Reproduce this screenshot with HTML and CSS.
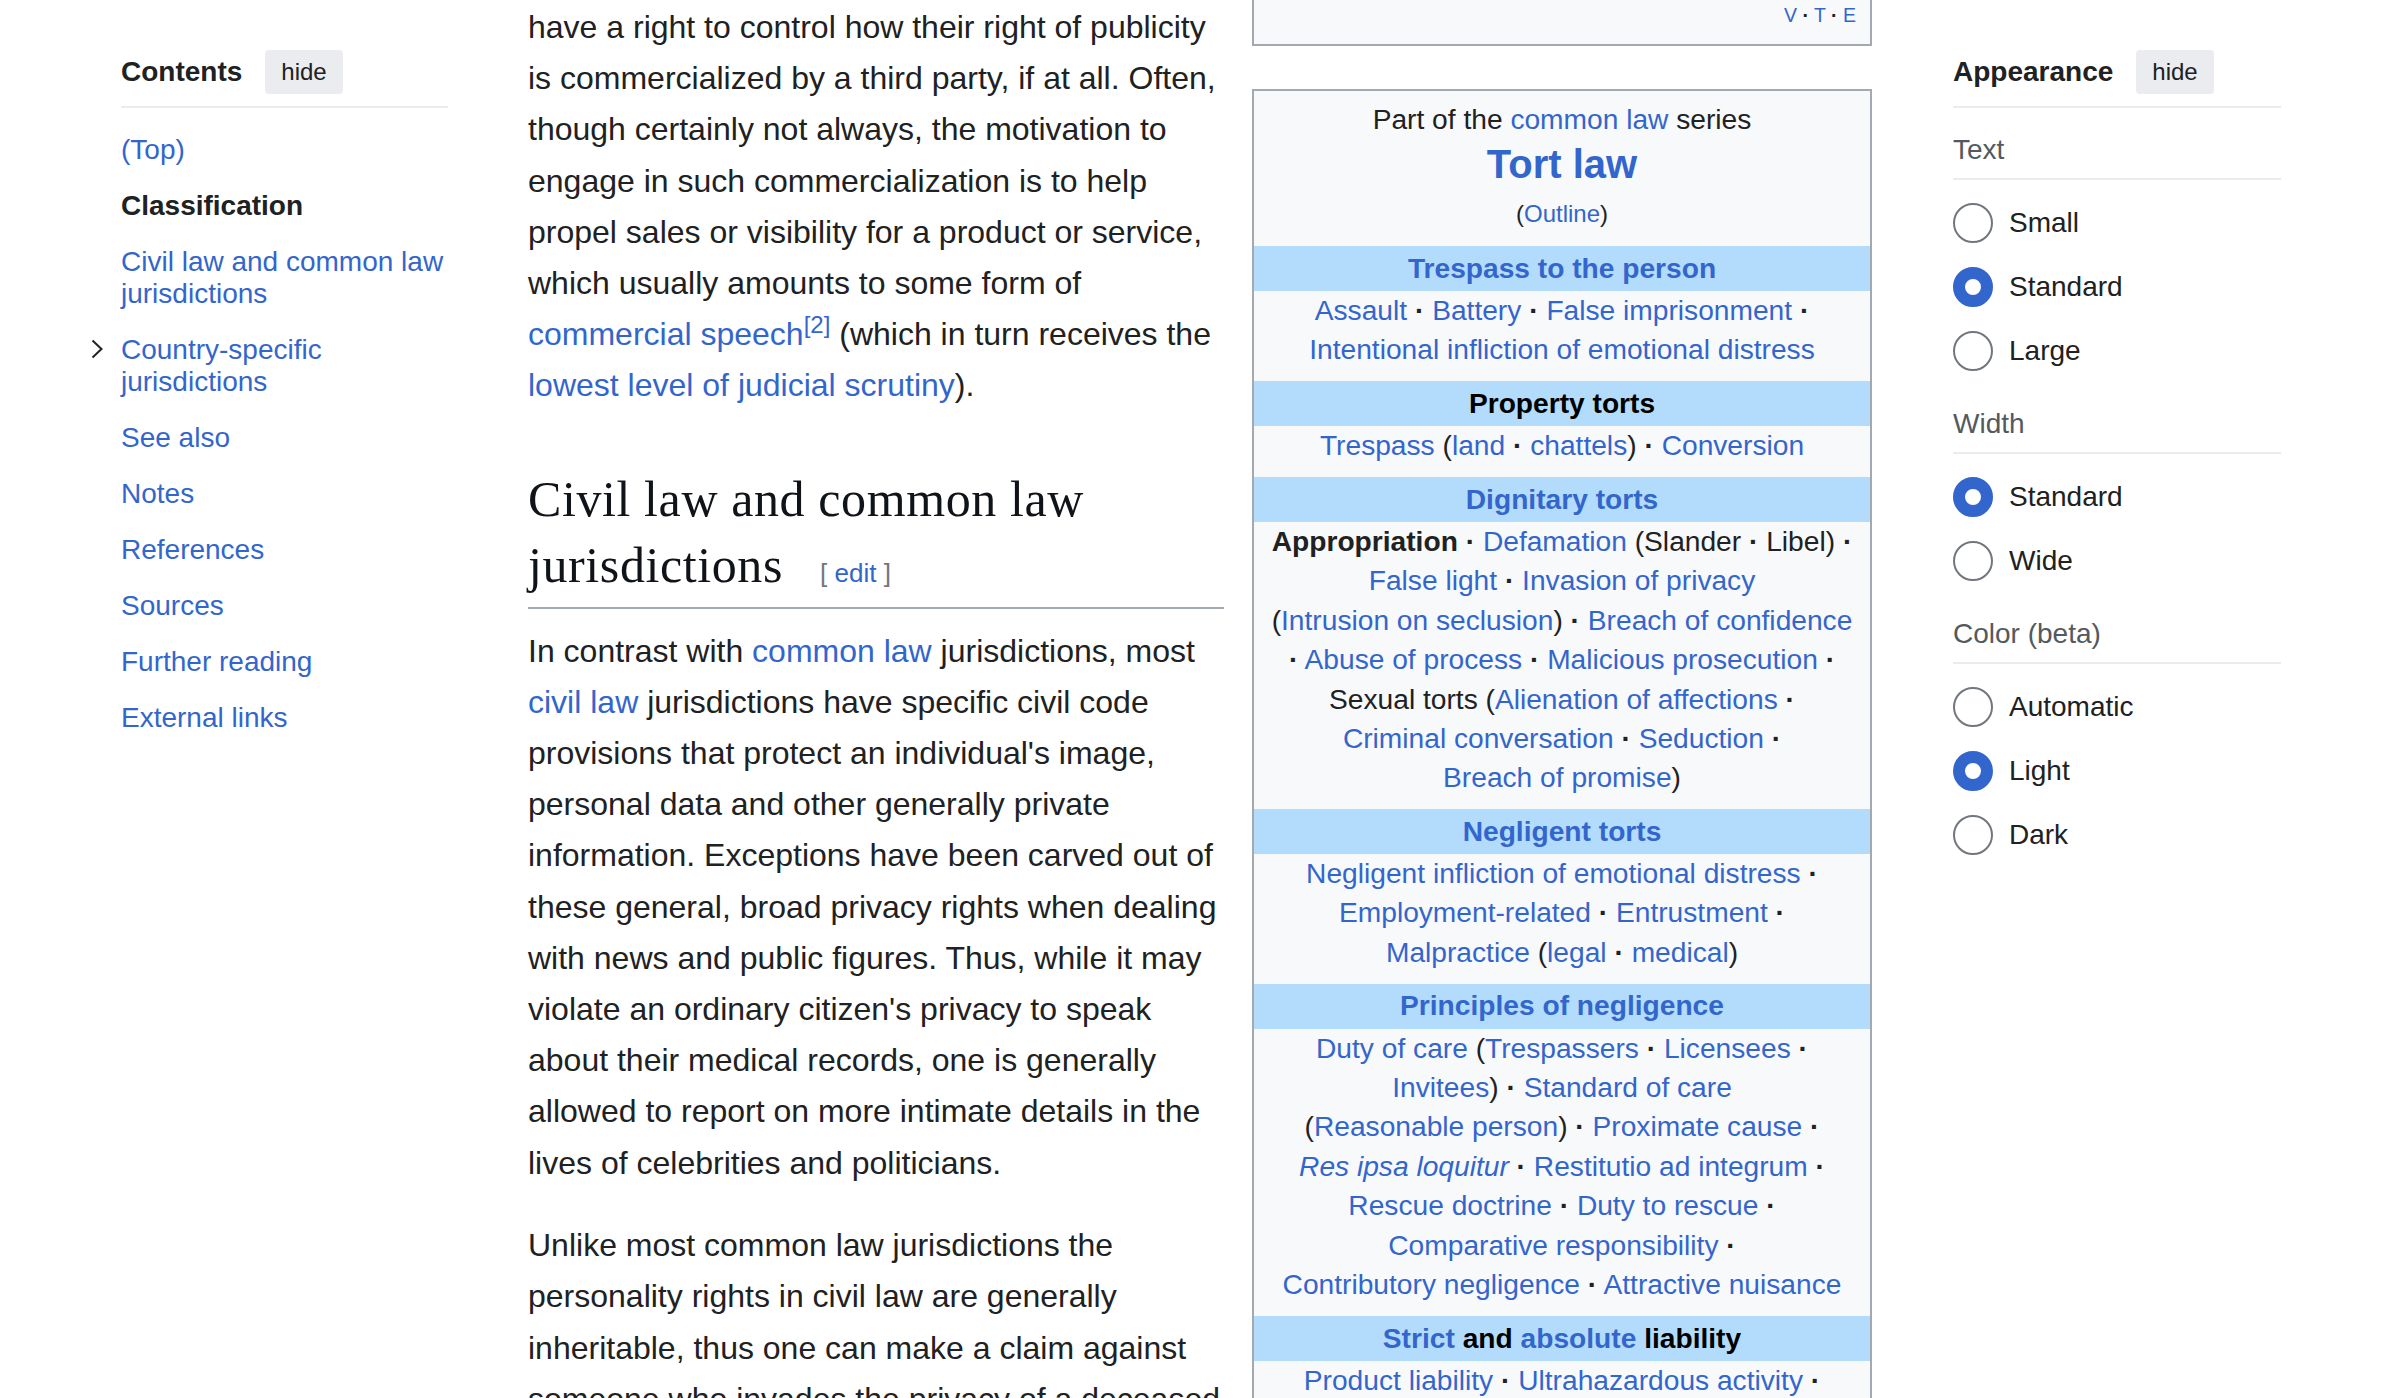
FILE: index.html
```html
<!DOCTYPE html>
<html lang="en">
<head>
<meta charset="utf-8">
<title>Personality rights</title>
<link rel="stylesheet" href="styles.css">
</head>
<body>
<div class="page">
  <nav class="toc">
    <div class="pin-head">
      <span class="pin-title">Contents</span>
      <button class="hide-btn">hide</button>
    </div>
    <ul class="toc-list">
      <li><a href="#">(Top)</a></li>
      <li class="active">Classification</li>
      <li><a href="#">Civil law and common law jurisdictions</a></li>
      <li>
        <span class="toggle"><svg width="12" height="20" viewBox="0 0 12 20"><path d="M1.5 1.5 L10.5 10 L1.5 18.5" fill="none" stroke="#202122" stroke-width="2"/></svg></span>
        <a href="#">Country-specific jurisdictions</a>
      </li>
      <li><a href="#">See also</a></li>
      <li><a href="#">Notes</a></li>
      <li><a href="#">References</a></li>
      <li><a href="#">Sources</a></li>
      <li><a href="#">Further reading</a></li>
      <li><a href="#">External links</a></li>
    </ul>
  </nav>

  <main class="main">
    <div class="text">
      <p>have a right to control how their right of publicity is commercialized by a third party, if at all. Often, though certainly not always, the motivation to engage in such commercialization is to help propel sales or visibility for a product or service, which usually amounts to some form of <a href="#">commercial speech</a><sup class="ref"><a href="#">[2]</a></sup> (which in turn receives the <a href="#">lowest level of judicial scrutiny</a>).</p>
      <h2>Civil law and common law jurisdictions<span class="editsection">[ <a href="#">edit</a> ]</span></h2>
      <p>In contrast with <a href="#">common law</a> jurisdictions, most <a href="#">civil law</a> jurisdictions have specific civil code provisions that protect an individual's image, personal data and other generally private information. Exceptions have been carved out of these general, broad privacy rights when dealing with news and public figures. Thus, while it may violate an ordinary citizen's privacy to speak about their medical records, one is generally allowed to report on more intimate details in the lives of celebrities and politicians.</p>
      <p>Unlike most common law jurisdictions the personality rights in civil law are generally inheritable, thus one can make a claim against someone who invades the privacy of a deceased person.</p>
    </div>

    <aside class="sidebar">
      <div class="navtail"><a href="#">V</a> <b>·</b> <a href="#">T</a> <b>·</b> <a href="#">E</a></div>
      <div class="infobox">
        <div class="pretitle">Part of the <a href="#">common law</a> series</div>
        <div class="ititle"><a href="#">Tort law</a></div>
        <div class="outline">(<a href="#">Outline</a>)</div>

        <div class="band"><a href="#">Trespass to the person</a></div>
        <div class="ibody">
          <div class="ln"><a href="#">Assault</a>&nbsp;<b>·</b> <a href="#">Battery</a>&nbsp;<b>·</b> <a href="#">False imprisonment</a>&nbsp;<b>·</b></div>
          <div class="ln"><a href="#">Intentional infliction of emotional distress</a></div>
        </div>

        <div class="band">Property torts</div>
        <div class="ibody">
          <div class="ln"><a href="#">Trespass</a> (<a href="#">land</a>&nbsp;<b>·</b> <a href="#">chattels</a>)&nbsp;<b>·</b> <a href="#">Conversion</a></div>
        </div>

        <div class="band"><a href="#">Dignitary torts</a></div>
        <div class="ibody">
          <div class="ln"><b>Appropriation</b>&nbsp;<b>·</b> <a href="#">Defamation</a> (Slander&nbsp;<b>·</b> Libel)&nbsp;<b>·</b></div>
          <div class="ln"><a href="#">False light</a>&nbsp;<b>·</b> <a href="#">Invasion of privacy</a></div>
          <div class="ln">(<a href="#">Intrusion on seclusion</a>)&nbsp;<b>·</b> <a href="#">Breach of confidence</a></div>
          <div class="ln"><b>·</b> <a href="#">Abuse of process</a>&nbsp;<b>·</b> <a href="#">Malicious prosecution</a>&nbsp;<b>·</b></div>
          <div class="ln">Sexual torts (<a href="#">Alienation of affections</a>&nbsp;<b>·</b></div>
          <div class="ln"><a href="#">Criminal conversation</a>&nbsp;<b>·</b> <a href="#">Seduction</a>&nbsp;<b>·</b></div>
          <div class="ln"><a href="#">Breach of promise</a>)</div>
        </div>

        <div class="band"><a href="#">Negligent torts</a></div>
        <div class="ibody">
          <div class="ln"><a href="#">Negligent infliction of emotional distress</a>&nbsp;<b>·</b></div>
          <div class="ln"><a href="#">Employment-related</a>&nbsp;<b>·</b> <a href="#">Entrustment</a>&nbsp;<b>·</b></div>
          <div class="ln"><a href="#">Malpractice</a> (<a href="#">legal</a>&nbsp;<b>·</b> <a href="#">medical</a>)</div>
        </div>

        <div class="band"><a href="#">Principles of negligence</a></div>
        <div class="ibody">
          <div class="ln"><a href="#">Duty of care</a> (<a href="#">Trespassers</a>&nbsp;<b>·</b> <a href="#">Licensees</a>&nbsp;<b>·</b></div>
          <div class="ln"><a href="#">Invitees</a>)&nbsp;<b>·</b> <a href="#">Standard of care</a></div>
          <div class="ln">(<a href="#">Reasonable person</a>)&nbsp;<b>·</b> <a href="#">Proximate cause</a>&nbsp;<b>·</b></div>
          <div class="ln"><a href="#"><i>Res ipsa loquitur</i></a>&nbsp;<b>·</b> <a href="#">Restitutio ad integrum</a>&nbsp;<b>·</b></div>
          <div class="ln"><a href="#">Rescue doctrine</a>&nbsp;<b>·</b> <a href="#">Duty to rescue</a>&nbsp;<b>·</b></div>
          <div class="ln"><a href="#">Comparative responsibility</a>&nbsp;<b>·</b></div>
          <div class="ln"><a href="#">Contributory negligence</a>&nbsp;<b>·</b> <a href="#">Attractive nuisance</a></div>
        </div>

        <div class="band"><a href="#">Strict</a> and <a href="#">absolute</a> liability</div>
        <div class="ibody">
          <div class="ln"><a href="#">Product liability</a>&nbsp;<b>·</b> <a href="#">Ultrahazardous activity</a>&nbsp;<b>·</b></div>
          <div class="ln"><a href="#">Public nuisance</a></div>
        </div>
      </div>
    </aside>
  </main>

  <aside class="appearance">
    <div class="pin-head">
      <span class="pin-title">Appearance</span>
      <button class="hide-btn">hide</button>
    </div>
    <section class="ap-sec">
      <div class="ap-label">Text</div>
      <ul class="radios">
        <li class="radio-row"><span class="radio"></span>Small</li>
        <li class="radio-row"><span class="radio on"></span>Standard</li>
        <li class="radio-row"><span class="radio"></span>Large</li>
      </ul>
    </section>
    <section class="ap-sec">
      <div class="ap-label">Width</div>
      <ul class="radios">
        <li class="radio-row"><span class="radio on"></span>Standard</li>
        <li class="radio-row"><span class="radio"></span>Wide</li>
      </ul>
    </section>
    <section class="ap-sec">
      <div class="ap-label">Color (beta)</div>
      <ul class="radios">
        <li class="radio-row"><span class="radio"></span>Automatic</li>
        <li class="radio-row"><span class="radio on"></span>Light</li>
        <li class="radio-row"><span class="radio"></span>Dark</li>
      </ul>
    </section>
  </aside>
</div>
</body>
</html>
```
FILE: styles.css
```css
html, body {
  margin: 0;
  padding: 0;
  background: #ffffff;
}

body {
  font-family: "Liberation Sans", Arial, Helvetica, sans-serif;
  color: #202122;
}

a {
  color: #3366cc;
  text-decoration: none;
}

.page {
  display: flex;
  align-items: flex-start;
  padding-left: 121px;
  height: 1398px;
  overflow: hidden;
}

/* ---------- pinned headers ---------- */
.pin-head {
  display: flex;
  align-items: center;
  gap: 23px;
  padding-bottom: 12px;
  border-bottom: 2px solid #eaecf0;
}

.pin-title {
  font-weight: bold;
  font-size: 28px;
  line-height: 44px;
}

.hide-btn {
  font-family: "Liberation Sans", Arial, sans-serif;
  font-size: 24px;
  color: #202122;
  background: #eaecf0;
  border: 0;
  border-radius: 4px;
  height: 44px;
  padding: 0 16px;
  line-height: 44px;
}

/* ---------- table of contents ---------- */
.toc {
  flex: none;
  width: 327px;
  margin-top: 50px;
  font-size: 28px;
}

.toc-list {
  list-style: none;
  margin: 14px 0 0;
  padding: 0;
}

.toc-list li {
  position: relative;
  padding: 12px 0;
  line-height: 32px;
}

.toc-list li.active {
  font-weight: bold;
}

.toggle {
  position: absolute;
  left: -30px;
  top: 17px;
  width: 12px;
  height: 20px;
  display: block;
}

.toggle svg {
  display: block;
}

/* ---------- main column ---------- */
.main {
  flex: none;
  display: flex;
  align-items: flex-start;
  margin-left: 80px;
}

.text {
  flex: none;
  width: 696px;
  padding-top: 2px;
  font-size: 32px;
  line-height: 51.2px;
}

.text p {
  margin: 0 0 31.5px;
}

.ref {
  font-size: 24px;
  line-height: 1;
  vertical-align: 12px;
}

.text h2 {
  font-family: "Liberation Serif", Georgia, "Times New Roman", serif;
  font-weight: normal;
  font-size: 50px;
  letter-spacing: 0.6px;
  line-height: 66px;
  color: #101418;
  margin: 54.4px 0 16.5px;
  padding-bottom: 9px;
  border-bottom: 2px solid #a2a9b1;
}

.editsection {
  font-family: "Liberation Sans", Arial, sans-serif;
  font-size: 26px;
  line-height: 1;
  letter-spacing: 0;
  color: #72777d;
  margin-left: 37px;
  white-space: nowrap;
}

/* ---------- sidebar infobox ---------- */
.sidebar {
  flex: none;
  width: 620px;
  margin-left: 28px;
  font-size: 28.16px;
  line-height: 1.4;
  color: #202122;
}

.navtail {
  height: 44px;
  border: 2px solid #a2a9b1;
  border-top: 0;
  background: #f8f9fa;
  text-align: right;
  padding-right: 14px;
  font-size: 19.5px;
  line-height: 30px;
}

.navtail b {
  color: #202122;
}

.infobox {
  margin-top: 43px;
  border: 2px solid #a2a9b1;
  background: #f8f9fa;
  text-align: center;
  padding-top: 9px;
}

.pretitle {
  line-height: 39.4px;
}

.ititle {
  font-size: 40px;
  font-weight: bold;
  line-height: 50px;
}

.outline {
  font-size: 24px;
  line-height: 34px;
  margin-top: 8px;
  padding-bottom: 14.6px;
}

.band {
  background: #b3dcfc;
  font-weight: bold;
  padding: 2.8px 0;
  line-height: 39.42px;
  color: #000000;
}

.ibody {
  padding-bottom: 11.26px;
  line-height: 39.42px;
}

.ln {
  white-space: nowrap;
}

/* ---------- appearance panel ---------- */
.appearance {
  flex: none;
  width: 328px;
  margin-left: 81px;
  margin-top: 50px;
}

.ap-sec {
  margin-top: 20.5px;
}

.ap-sec:first-of-type {
  margin-top: 21.5px;
}

.ap-label {
  color: #54595d;
  font-size: 28px;
  line-height: 40px;
  padding-bottom: 8px;
  border-bottom: 2px solid #eaecf0;
}

.radios {
  list-style: none;
  margin: 11.5px 0 0;
  padding: 0;
}

.radio-row {
  display: flex;
  align-items: center;
  gap: 16px;
  height: 64px;
  font-size: 28px;
  color: #202122;
}

.radio {
  flex: none;
  width: 40px;
  height: 40px;
  box-sizing: border-box;
  border-radius: 50%;
  border: 2px solid #72777d;
  background: #ffffff;
}

.radio.on {
  border: 12px solid #3366cc;
}
```
